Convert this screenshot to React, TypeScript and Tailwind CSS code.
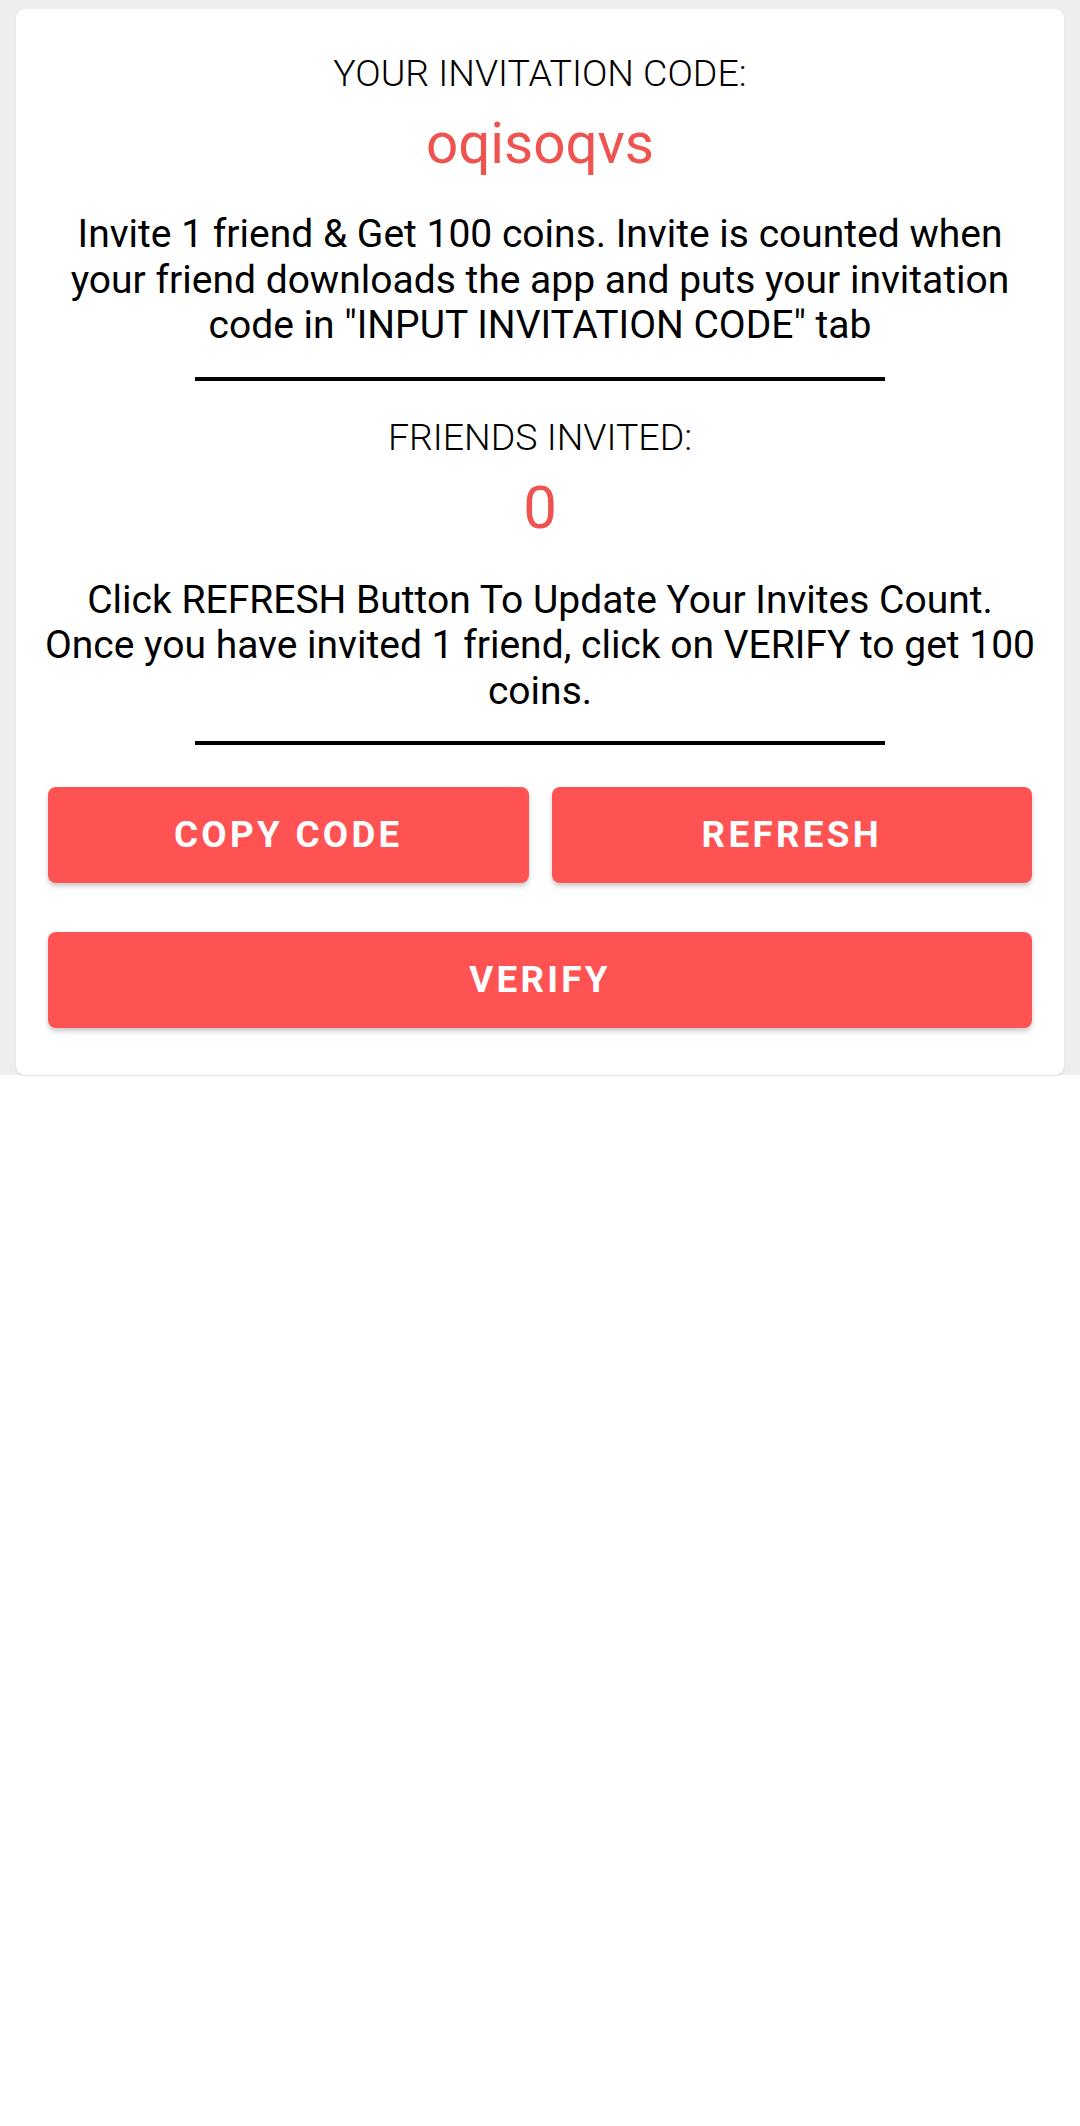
const FONT = "font-['Roboto','Liberation_Sans',sans-serif]";

function Divider({ className = '' }: { className?: string }) {
  return <div className={`mx-auto h-[4px] w-[690px] bg-black ${className}`} />;
}

function ActionButton({ label, className = '' }: { label: string; className?: string }) {
  return (
    <button
      className={`flex h-[96px] items-center justify-center rounded-[8px] bg-[#ff5252] text-[36.75px] font-bold tracking-[0.09em] text-white shadow-[0_3px_5px_rgba(0,0,0,0.22)] ${className}`}
    >
      {label}
    </button>
  );
}

export default function App() {
  return (
    <div className={`min-h-[2126px] bg-white ${FONT}`}>
      <div className="bg-[#eeeeee] px-4 pt-[9px]">
        <div className="rounded-[9px] bg-white px-[32px] pb-[47px] pt-[43px] text-center text-black shadow-[0_1px_2px_rgba(0,0,0,0.12)]">
          <div className="text-[37.5px] font-light leading-[43px]">YOUR INVITATION CODE:</div>
          <div className="mt-[17px] text-[56.5px] leading-[64px] text-[#ef5350]">oqisoqvs</div>
          <p className="-mx-[20px] mt-[36px] text-[39px] leading-[45.5px]">
            Invite 1 friend &amp; Get 100 coins. Invite is counted when
            <br />
            your friend downloads the app and puts your invitation
            <br />
            code in "INPUT INVITATION CODE" tab
          </p>
          <Divider className="mt-[28px]" />

          <div className="mt-[35px] text-[37.5px] font-light leading-[43px]">FRIENDS INVITED:</div>
          <div className="mt-[14px] text-[60px] leading-[70px] text-[#ef5350]">0</div>
          <p className="-mx-[24px] mt-[35px] text-[39px] leading-[45.5px]">
            Click REFRESH Button To Update Your Invites Count.
            <br />
            Once you have invited 1 friend, click on VERIFY to get 100
            <br />
            coins.
          </p>
          <Divider className="mt-[27px]" />

          <div className="mt-[42px] grid grid-cols-2 gap-[23px]">
            <ActionButton label="COPY CODE" />
            <ActionButton label="REFRESH" />
          </div>
          <ActionButton label="VERIFY" className="mt-[49px] w-full" />
        </div>
      </div>
    </div>
  );
}
